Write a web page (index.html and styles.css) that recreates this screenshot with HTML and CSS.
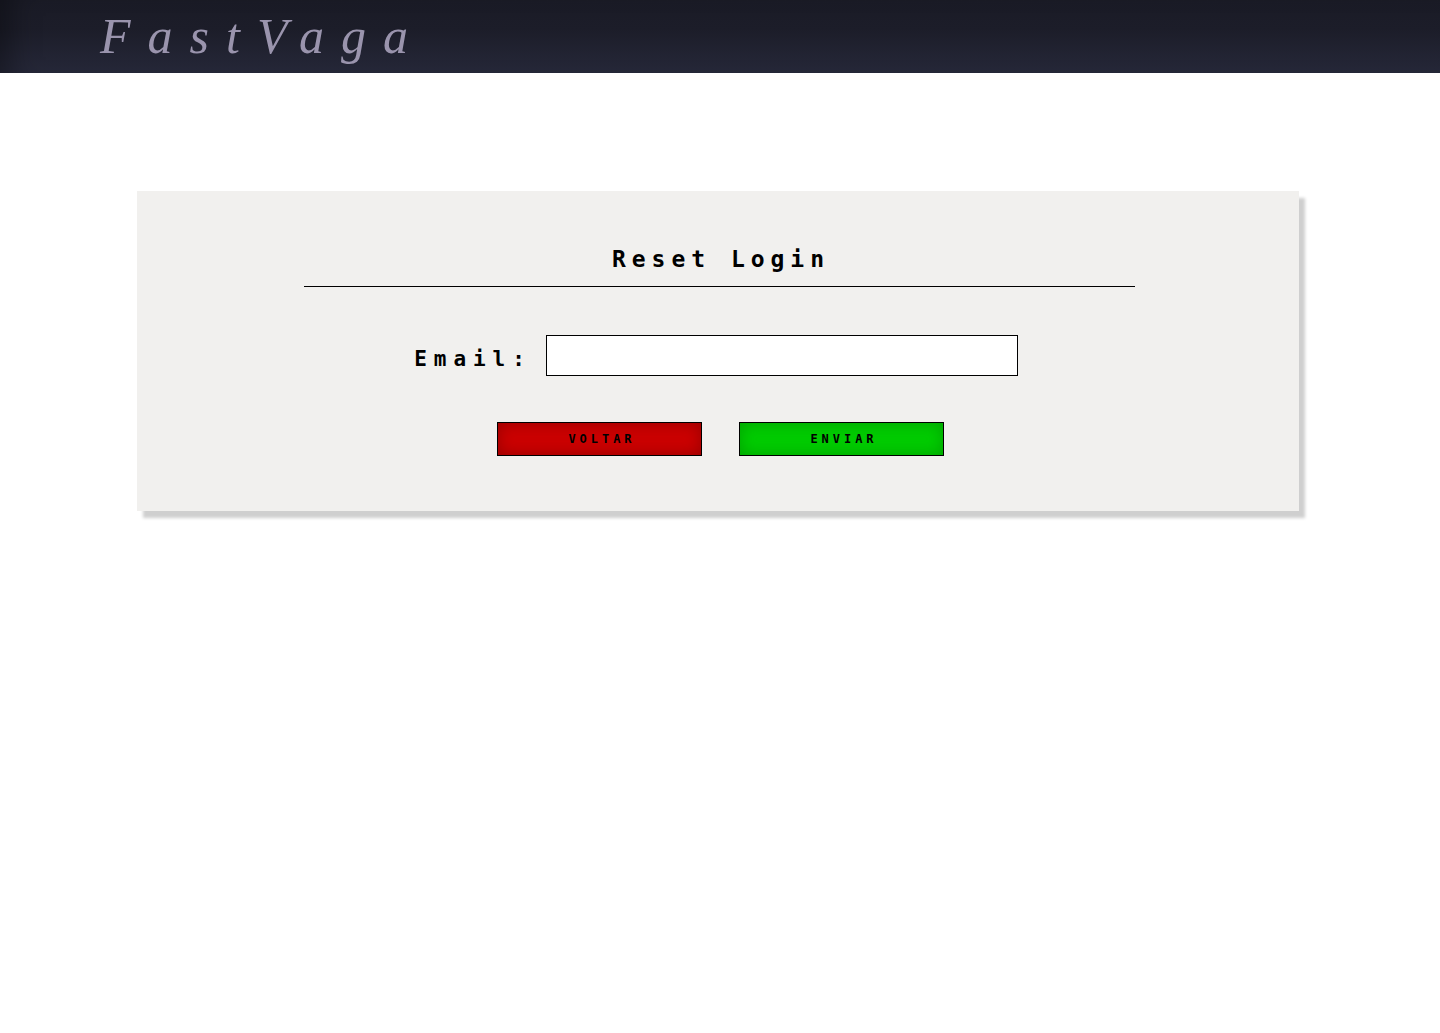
FILE: index.html
```html
<!DOCTYPE html>
<html lang="pt">
<head>
<meta charset="utf-8">
<title>FastVaga - Reset Login</title>
<link rel="stylesheet" href="styles.css">
</head>
<body>
<header class="topbar">
  <div class="logo">FastVaga</div>
</header>
<main class="page">
  <section class="card">
    <h1 class="title">Reset Login</h1>
    <hr class="rule">
    <form class="form">
      <div class="field">
        <label class="label" for="email">Email:</label>
        <input class="input" id="email" type="text">
      </div>
      <div class="actions">
        <button type="button" class="btn btn-back">VOLTAR</button>
        <button type="button" class="btn btn-send">ENVIAR</button>
      </div>
    </form>
  </section>
</main>
</body>
</html>
```

FILE: styles.css
```css
html, body {
  margin: 0;
  padding: 0;
  background: #ffffff;
}
body {
  font-family: "DejaVu Sans Mono", "Noto Sans CJK JP", monospace;
}
.topbar {
  height: 73px;
  background: linear-gradient(to bottom, #1a1b26 0%, #1c1d29 40%, #262839 100%);
  box-shadow: inset 30px 0 30px -20px rgba(0,0,0,0.35);
  display: flex;
  align-items: center;
}
.logo {
  font-family: "Liberation Serif", "Times New Roman", serif;
  font-style: italic;
  font-size: 50px;
  letter-spacing: 0.34em;
  color: #9a94ad;
  padding-left: 100px;
  line-height: 1;
  margin-top: -1px;
}
.page {
  padding: 118px 0 40px 137px;
}
.card {
  width: 1162px;
  height: 320px;
  box-sizing: border-box;
  background: #f1f0ee;
  box-shadow: 6px 7px 3px #cfcfcf;
  padding-top: 40px;
  display: flex;
  flex-direction: column;
  align-items: center;
}
.title {
  margin: 0;
  font-size: 23px;
  font-weight: bold;
  letter-spacing: 0.26em;
  line-height: 56px;
  padding-left: 0.26em;
  color: #000;
}
.rule {
  width: 831px;
  margin: -1px 0 0 3px;
  border: 0;
  border-top: 1px solid #000;
  height: 0;
}
.form {
  display: flex;
  flex-direction: column;
  align-items: center;
}
.field {
  display: flex;
  align-items: center;
  margin-top: 48px;
  gap: 14px;
  margin-left: -4px;
}
.label {
  font-size: 21px;
  font-weight: bold;
  letter-spacing: 0.33em;
  color: #000;
  margin-top: 6px;
}
.input {
  width: 472px;
  height: 41px;
  box-sizing: border-box;
  border: 1px solid #000;
  background: #fff;
  margin: 0;
  padding: 0 6px;
}
.actions {
  display: flex;
  gap: 37px;
  margin-top: 46px;
  margin-left: 6px;
}
.btn {
  width: 205px;
  height: 34px;
  border: 1px solid #000;
  font-family: inherit;
  font-size: 12px;
  font-weight: bold;
  letter-spacing: 0.33em;
  padding: 0 0 0 0.33em;
  color: #000;
  margin: 0;
}
.btn-back {
  background: #cc0000;
  box-shadow: inset 0 0 16px rgba(100,0,0,0.5);
}
.btn-send {
  background: #00cc00;
  box-shadow: inset 0 0 16px rgba(0,100,0,0.4);
}
```
